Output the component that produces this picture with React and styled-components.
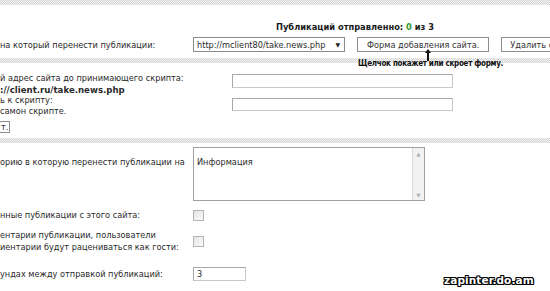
import React from "react";
import styled, { createGlobalStyle } from "styled-components";

const Global = createGlobalStyle`
  html, body { margin: 0; padding: 0; background: #fff; overflow: hidden; }
  body { width: 550px; height: 291px; font-family: "DejaVu Sans", Verdana, sans-serif; font-size: 8.2px; color: #2a2a2a; }
`;

const Page = styled.div`
  position: relative;
  width: 550px;
  height: 291px;
  overflow: hidden;
`;

const Hatch = styled.div`
  height: ${(p) => p.$h || 5}px;
  margin-top: ${(p) => p.$mt || 0}px;
  background-color: #fff;
  background-image: repeating-conic-gradient(#d4d4d4 0 25%, #f4f4f4 0 50%);
  background-size: 2px 2px;
`;

const Title = styled.div`
  margin: 16px 0 0 276px;
  font-weight: bold;
  font-size: 8.3px;
  color: #1a1a1a;
  height: 12px;
  line-height: 12px;
`;

const Green = styled.span`
  color: #2f9a2f;
`;

const Row = styled.div`
  display: flex;
  align-items: ${(p) => p.$align || "center"};
  height: ${(p) => (p.$h ? `${p.$h}px` : "auto")};
  margin-top: ${(p) => p.$mt || 0}px;
`;

const Label = styled.div`
  width: ${(p) => p.$w || 193}px;
  flex: none;
  line-height: ${(p) => p.$lh || 12}px;
  white-space: nowrap;
  padding-top: ${(p) => p.$pt || 0}px;
`;

const Bold = styled.span`
  font-weight: bold;
  font-size: 8.6px;
`;

const Select = styled.div`
  width: 143px;
  height: 13px;
  border: 1px solid #8a8a8a;
  display: flex;
  align-items: center;
  justify-content: space-between;
  padding: 0 4px 0 3px;
  box-sizing: content-box;
  background: #fff;
  flex: none;
`;

const Caret = styled.span`
  font-size: 6px;
  color: #222;
`;

const Btn = styled.div`
  height: ${(p) => p.$h || 13}px;
  margin-left: ${(p) => p.$ml || 0}px;
  border: 1px solid #8e8e8e;
  background: #fff;
  padding: 0 ${(p) => p.$px || 8}px;
  display: flex;
  align-items: center;
  white-space: nowrap;
  flex: none;
  color: #333;
  ${(p) => p.$clipLeft && "border-left: none;"}
`;

const HintWrap = styled.div`
  position: relative;
`;

const Hint = styled.div`
  position: absolute;
  left: 358px;
  top: -4px;
  font-family: Tahoma, "DejaVu Sans Condensed", "DejaVu Sans", sans-serif;
  font-size: 8px;
  font-weight: bold;
  letter-spacing: -0.3px;
  color: #111;
  white-space: nowrap;
`;

const Arrow = styled.svg`
  position: absolute;
  left: 425px;
  top: -14px;
`;

const Input = styled.div`
  width: ${(p) => p.$w || 220}px;
  height: ${(p) => p.$h || 12}px;
  margin-top: ${(p) => p.$mt || 0}px;
  border: 1px solid #a8a8a8;
  border-bottom-color: #c8c8c8;
  border-right-color: #c8c8c8;
  background: #fff;
  padding-left: 3px;
  display: flex;
  align-items: center;
  flex: none;
  box-sizing: border-box;
`;

const TextArea = styled.div`
  width: 232px;
  height: 54px;
  border: 1px solid #a0a0a0;
  display: flex;
  box-sizing: border-box;
  background: #fff;
  flex: none;
`;

const TAText = styled.div`
  flex: 1;
  padding: 9px 0 0 3px;
`;

const Scroll = styled.div`
  width: 11px;
  border-left: 1px solid #d8d8d8;
  background: #f2f2f2;
  display: flex;
  flex-direction: column;
  justify-content: space-between;
  align-items: center;
  font-size: 5px;
  color: #aaa;
  padding: 3px 0 2px;
`;

const Check = styled.div`
  width: 11px;
  height: 11px;
  box-sizing: border-box;
  border: 1px solid #b4b4b4;
  background: linear-gradient(135deg, #e6e6e6, #fafafa);
  flex: none;
`;

const Watermark = styled.div`
  position: absolute;
  left: 444px;
  top: 274px;
  font-family: "DejaVu Sans", sans-serif;
  font-weight: bold;
  font-size: 10.5px;
  letter-spacing: 0.1px;
  color: #fff;
  text-shadow: 1px 0 0 #000, -1px 0 0 #000, 0 1px 0 #000, 0 -1px 0 #000,
    1px 1px 0 #000, -1px -1px 0 #000, 1px -1px 0 #000, -1px 1px 0 #000;
`;

export default function App() {
  return (
    <Page>
      <Global />
      <Hatch $h={5} />
      <Title>
        Публикаций отправленно: <Green>0</Green> из 3
      </Title>
      <Row $mt={4} $h={15}>
        <Label>на который перенести публикации:</Label>
        <Select>
          <span>http://mclient80/take.news.php</span>
          <Caret>▼</Caret>
        </Select>
        <Btn $ml={12} $px={9}>Форма добавления сайта.</Btn>
        <Btn $ml={12} $px={8}>Удалить сайт</Btn>
      </Row>
      <Hatch $h={5} $mt={6} />
      <HintWrap>
        <Arrow width="6" height="12" viewBox="0 0 6 12">
          <path d="M3 0 L6 4 L4 4 L4 12 L2 12 L2 4 L0 4 Z" fill="#111" />
        </Arrow>
        <Hint>Щелчок покажет или скроет форму.</Hint>
      </HintWrap>
      <Row $mt={9} $h={24} $align="flex-start">
        <Label $w={232}>
          й адрес сайта до принимающего скрипта:
          <br />
          <Bold>://client.ru/take.news.php</Bold>
        </Label>
        <Input $w={221} $h={14} $mt={2} />
      </Row>
      <Row $mt={-1} $h={22} $align="flex-start">
        <Label $w={232} $lh={11}>
          ь к скрипту:
          <br />
          самон скрипте.
        </Label>
        <Input $w={221} $h={13} $mt={3} />
      </Row>
      <Row $mt={4} $h={12}>
        <Btn $clipLeft $px={1} $h={10}>т.</Btn>
      </Row>
      <Hatch $h={5} $mt={5} />
      <Row $mt={4} $h={54} $align="flex-start">
        <Label $pt={9}>орию в которую перенести публикации на</Label>
        <TextArea>
          <TAText>Информация</TAText>
          <Scroll>
            <span>▲</span>
            <span>▼</span>
          </Scroll>
        </TextArea>
      </Row>
      <Row $mt={8} $h={12}>
        <Label>нные публикации с этого сайта:</Label>
        <Check />
      </Row>
      <Row $mt={8} $h={24}>
        <Label>
          ентарии публикации, пользователи
          <br />
          иентарии будут рацениваться как гости:
        </Label>
        <Check />
      </Row>
      <Row $mt={14} $h={14}>
        <Label>ундах между отправкой публикаций:</Label>
        <Input $w={53} $h={14}>3</Input>
      </Row>
      <Watermark>zapinter.do.am</Watermark>
    </Page>
  );
}
